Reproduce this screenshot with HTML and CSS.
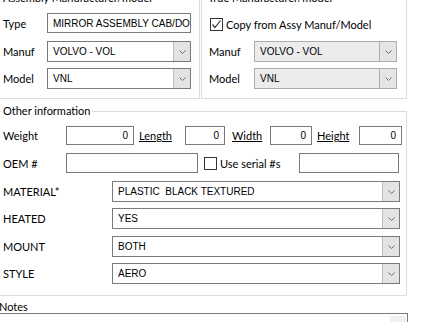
FILE: index.html
```html
<!DOCTYPE html>
<html lang="en">

<head>
  <meta charset="UTF-8">
  <title>Part details</title>
  <link rel="stylesheet" href="styles.css">
</head>

<body>
  <div class="form">
    <div class="top">
      <fieldset class="group assy">
        <legend>Assembly Manufacturer/model</legend>
        <div class="row r-type">
          <span class="lbl">Type</span>
          <div class="box w-type">MIRROR ASSEMBLY CAB/DO</div>
        </div>
        <div class="row r-mid">
          <span class="lbl">Manuf</span>
          <div class="combo w-type">
            <span class="val">VOLVO - VOL</span>
            <span class="btn"><svg width="7" height="4" viewBox="0 0 7 4"><path d="M0.5 0.5 L3.5 3.5 L6.5 0.5" /></svg></span>
          </div>
        </div>
        <div class="row">
          <span class="lbl">Model</span>
          <div class="combo w-type">
            <span class="val">VNL</span>
            <span class="btn"><svg width="7" height="4" viewBox="0 0 7 4"><path d="M0.5 0.5 L3.5 3.5 L6.5 0.5" /></svg></span>
          </div>
        </div>
      </fieldset>

      <fieldset class="group true">
        <legend>True Manufacturer/model</legend>
        <div class="row r-type r-check">
          <span class="check on"><svg width="11" height="11" viewBox="0 0 11 11"><path d="M1.5 5.5 L4 8.5 L9.5 1.5" /></svg></span>
          <span>Copy from Assy Manuf/Model</span>
        </div>
        <div class="row r-mid">
          <span class="lbl lbl-true">Manuf</span>
          <div class="combo off w-true">
            <span class="val">VOLVO - VOL</span>
            <span class="btn"><svg width="7" height="4" viewBox="0 0 7 4"><path d="M0.5 0.5 L3.5 3.5 L6.5 0.5" /></svg></span>
          </div>
        </div>
        <div class="row">
          <span class="lbl lbl-true">Model</span>
          <div class="combo off w-true">
            <span class="val">VNL</span>
            <span class="btn"><svg width="7" height="4" viewBox="0 0 7 4"><path d="M0.5 0.5 L3.5 3.5 L6.5 0.5" /></svg></span>
          </div>
        </div>
      </fieldset>
    </div>

    <fieldset class="group other">
      <legend>Other information</legend>
      <div class="row r-weight">
        <span class="lbl lbl-other">Weight</span>
        <div class="box num w-weight">0</div>
        <span class="link l-length">Length</span>
        <div class="box num w-length">0</div>
        <span class="link l-width">Width</span>
        <div class="box num w-width">0</div>
        <span class="link l-height">Height</span>
        <div class="box num w-height">0</div>
      </div>
      <div class="row r-oem">
        <span class="lbl lbl-other">OEM #</span>
        <div class="box w-oem"></div>
        <span class="check"></span>
        <span class="serial">Use serial #s</span>
        <div class="box w-serial"></div>
      </div>
      <div class="row r-attr">
        <span class="lbl lbl-attr">MATERIAL*</span>
        <div class="combo w-attr">
          <span class="val">PLASTIC&nbsp; BLACK TEXTURED</span>
          <span class="btn"><svg width="7" height="4" viewBox="0 0 7 4"><path d="M0.5 0.5 L3.5 3.5 L6.5 0.5" /></svg></span>
        </div>
      </div>
      <div class="row r-attr2">
        <span class="lbl lbl-attr">HEATED</span>
        <div class="combo w-attr">
          <span class="val">YES</span>
          <span class="btn"><svg width="7" height="4" viewBox="0 0 7 4"><path d="M0.5 0.5 L3.5 3.5 L6.5 0.5" /></svg></span>
        </div>
      </div>
      <div class="row r-attr">
        <span class="lbl lbl-attr">MOUNT</span>
        <div class="combo w-attr">
          <span class="val">BOTH</span>
          <span class="btn"><svg width="7" height="4" viewBox="0 0 7 4"><path d="M0.5 0.5 L3.5 3.5 L6.5 0.5" /></svg></span>
        </div>
      </div>
      <div class="row">
        <span class="lbl lbl-attr">STYLE</span>
        <div class="combo w-attr">
          <span class="val">AERO</span>
          <span class="btn"><svg width="7" height="4" viewBox="0 0 7 4"><path d="M0.5 0.5 L3.5 3.5 L6.5 0.5" /></svg></span>
        </div>
      </div>
    </fieldset>

    <div class="notes-label">Notes</div>
    <div class="notes">
      <span class="scroll"></span>
    </div>
  </div>
</body>

</html>
```

FILE: styles.css
```css
body {
  margin: 0;
  font-family: Lato, 'Noto Sans', sans-serif;
  font-size: 11px;
  color: #000;
  background: #fff;
  overflow: hidden;
}

.form {
  width: 412px;
  margin-left: -4px;
}

.top {
  display: flex;
  gap: 1px;
  margin-top: -10px;
}

.group {
  margin: 0;
  border: 1px solid #dcdcdc;
  padding: 7px 6px 9px 6px;
  min-width: 0;
  box-sizing: border-box;
}

.group legend {
  padding: 0 2px;
  margin-left: -2px;
  line-height: 16px;
  color: #000;
}

.assy {
  width: 204px;
}

.true {
  width: 206px;
}

.other {
  width: 411px;
  margin-top: 4px;
  padding-bottom: 11px;
}

.row {
  display: flex;
  align-items: center;
  height: 21px;
}

.r-type {
  height: 20px;
  margin-bottom: 8px;
}

.r-mid {
  margin-bottom: 6px;
}

.r-check {
  align-items: flex-start;
  padding-top: 5px;
  box-sizing: border-box;
  padding-left: 2px;
}

.r-weight {
  height: 19px;
  margin-bottom: 8px;
}

.r-oem {
  height: 20px;
  margin-bottom: 8px;
}

.r-attr {
  margin-bottom: 6px;
}

.r-attr2 {
  margin-bottom: 7px;
}

.lbl {
  width: 44px;
  flex: none;
}

.lbl-true {
  width: 46px;
  padding-left: 1px;
  box-sizing: border-box;
}

.lbl-other {
  width: 63px;
}

.lbl-attr {
  width: 109px;
}

.box {
  height: 100%;
  box-sizing: border-box;
  border: 1px solid #7a7a7a;
  background: #fff;
  display: flex;
  align-items: center;
  padding: 0 5px;
  font-family: 'Liberation Sans', sans-serif;
  font-size: 10px;
  white-space: nowrap;
  overflow: hidden;
  flex: none;
}

.num {
  justify-content: flex-end;
  padding-right: 5px;
}

.w-type {
  width: 144px;
}

.w-true {
  width: 143px;
}

.w-weight {
  width: 68px;
}

.w-length {
  width: 40px;
}

.w-width {
  width: 42px;
}

.w-height {
  width: 43px;
}

.w-oem {
  width: 132px;
}

.w-serial {
  width: 100px;
}

.w-attr {
  width: 288px;
}

.link {
  text-decoration: underline;
  flex: none;
}

.l-length {
  margin-left: 5px;
  width: 46px;
}

.l-width {
  margin-left: 7px;
  width: 38px;
}

.l-height {
  margin-left: 5px;
  width: 42px;
}

.combo {
  height: 100%;
  box-sizing: border-box;
  border: 1px solid #7a7a7a;
  background: #fff;
  display: flex;
  flex: none;
}

.combo .val {
  flex: 1;
  display: flex;
  align-items: center;
  padding-left: 5px;
  font-family: 'Liberation Sans', sans-serif;
  font-size: 10px;
  white-space: nowrap;
  overflow: hidden;
}

.combo .btn {
  width: 16px;
  background: #e3e3e3;
  border-left: 1px solid #bdbdbd;
  display: flex;
  align-items: center;
  justify-content: center;
}

.combo svg path {
  fill: none;
  stroke: #6d6d6d;
  stroke-width: 1;
}

.combo.off {
  border-color: #adadad;
  background: #ececec;
}

.combo.off .btn {
  background: #e5e5e5;
  border-left-color: #adadad;
}

.check {
  width: 13px;
  height: 13px;
  box-sizing: border-box;
  border: 1px solid #333;
  background: #fff;
  flex: none;
  display: flex;
  align-items: center;
  justify-content: center;
  margin-right: 3px;
}

.check svg path {
  fill: none;
  stroke: #333;
  stroke-width: 1.2;
}

.r-oem .check {
  margin-left: 6px;
}

.serial {
  width: 79px;
  flex: none;
}

.notes-label {
  margin-top: 5px;
  margin-left: 3px;
  line-height: 12px;
}

.notes {
  margin-left: 2px;
  width: 410px;
  height: 30px;
  box-sizing: border-box;
  border: 1px solid #7a7a7a;
  display: flex;
  justify-content: flex-end;
  padding: 2px 1px;
}

.scroll {
  width: 16px;
  height: 20px;
  background: #f0f0f0;
}
```
